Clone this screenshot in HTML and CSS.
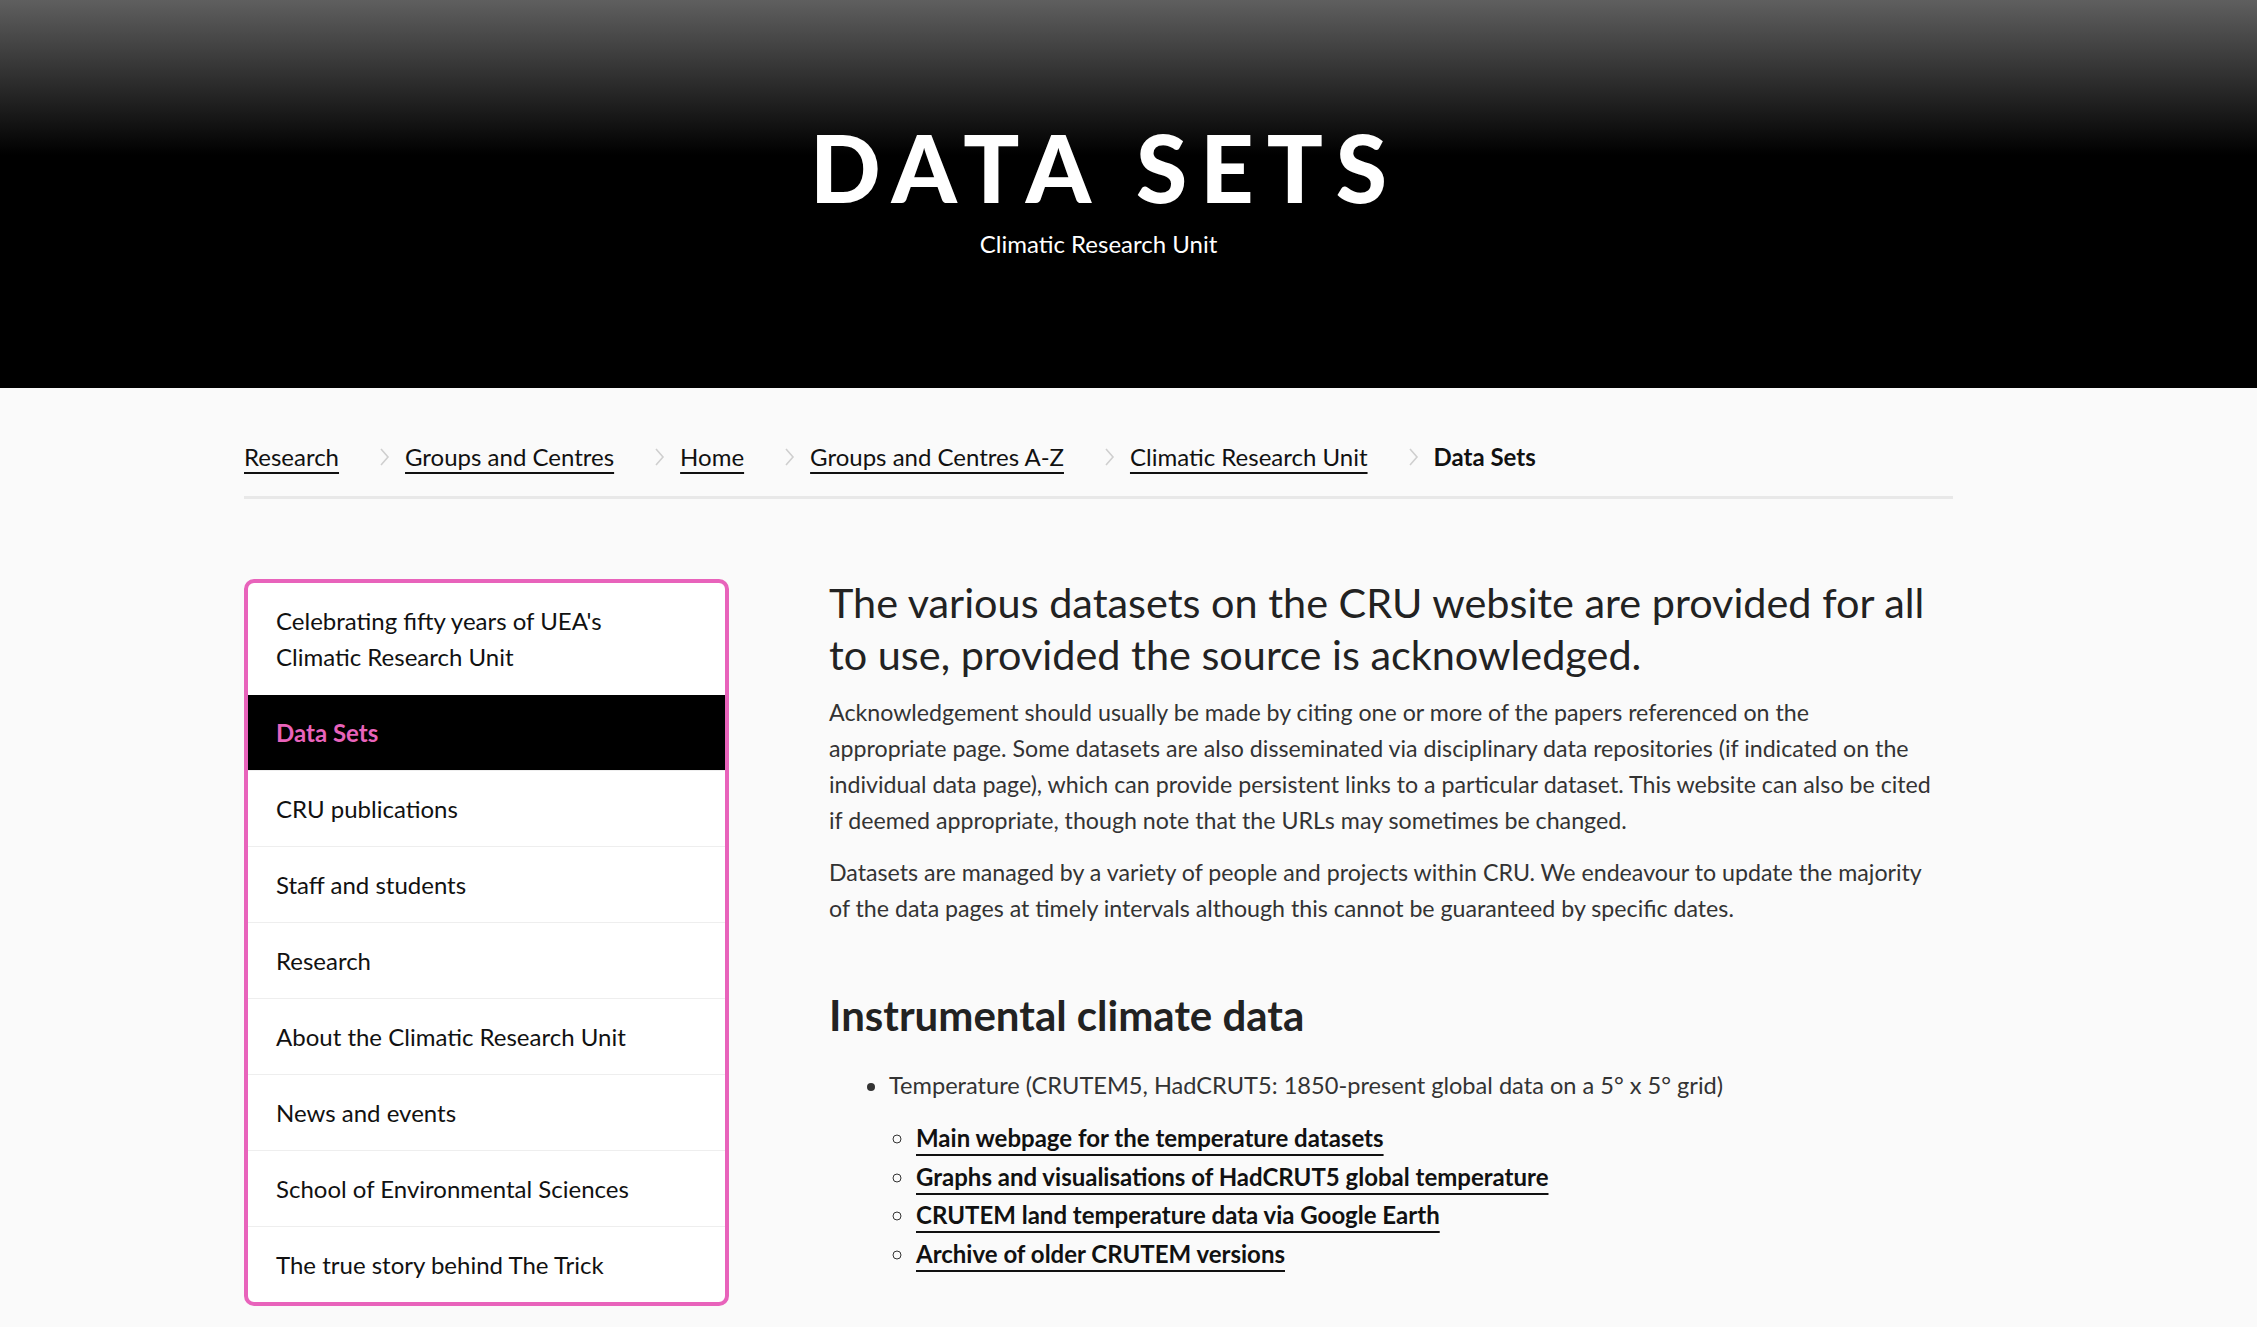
FILE: index.html
```html
<!DOCTYPE html>
<html lang="en">
<head>
    <meta charset="UTF-8">
    <meta name="viewport" content="width=device-width, initial-scale=1.0">
    <title>Data Sets - Climatic Research Unit</title>
    <link rel="stylesheet" href="styles.css">
</head>
<body>
    <header class="hero">
        <div class="page">
            <h1 class="hero-title">DATA SETS</h1>
            <p class="hero-sub">Climatic Research Unit</p>
        </div>
    </header>

    <div class="page">
        <nav class="crumbs">
            <ol>
                <li><a href="#">Research</a></li>
                <li><svg class="chev" width="11" height="18" viewBox="0 0 11 18"><path d="M2 1l7 8-7 8" fill="none" stroke="#cfcfcf" stroke-width="1.6"/></svg><a href="#">Groups and Centres</a></li>
                <li><svg class="chev" width="11" height="18" viewBox="0 0 11 18"><path d="M2 1l7 8-7 8" fill="none" stroke="#cfcfcf" stroke-width="1.6"/></svg><a href="#">Home</a></li>
                <li><svg class="chev" width="11" height="18" viewBox="0 0 11 18"><path d="M2 1l7 8-7 8" fill="none" stroke="#cfcfcf" stroke-width="1.6"/></svg><a href="#">Groups and Centres A-Z</a></li>
                <li><svg class="chev" width="11" height="18" viewBox="0 0 11 18"><path d="M2 1l7 8-7 8" fill="none" stroke="#cfcfcf" stroke-width="1.6"/></svg><a href="#">Climatic Research Unit</a></li>
                <li class="current"><svg class="chev" width="11" height="18" viewBox="0 0 11 18"><path d="M2 1l7 8-7 8" fill="none" stroke="#cfcfcf" stroke-width="1.6"/></svg>Data Sets</li>
            </ol>
        </nav>

        <div class="layout">
            <aside class="side-nav">
                <a href="#" class="side-item">Celebrating fifty years of UEA's Climatic Research Unit</a>
                <a href="#" class="side-item active">Data Sets</a>
                <a href="#" class="side-item">CRU publications</a>
                <a href="#" class="side-item">Staff and students</a>
                <a href="#" class="side-item">Research</a>
                <a href="#" class="side-item">About the Climatic Research Unit</a>
                <a href="#" class="side-item">News and events</a>
                <a href="#" class="side-item">School of Environmental Sciences</a>
                <a href="#" class="side-item">The true story behind The Trick</a>
            </aside>

            <main class="content">
                <h2 class="lead">The various datasets on the CRU website are provided for all to use, provided the source is acknowledged.</h2>
                <p>Acknowledgement should usually be made by citing one or more of the papers referenced on the<br>appropriate page. Some datasets are also disseminated via disciplinary data repositories (if indicated on the individual data page), which can provide persistent links to a particular dataset. This website can also be cited if deemed appropriate, though note that the URLs may sometimes be changed.</p>
                <p>Datasets are managed by a variety of people and projects within CRU. We endeavour to update the majority of the data pages at timely intervals although this cannot be guaranteed by specific dates.</p>

                <h3 class="section-title">Instrumental climate data</h3>
                <ul class="data-list">
                    <li>Temperature (CRUTEM5, HadCRUT5: 1850-present global data on a 5° x 5° grid)
                        <ul class="sub-list">
                            <li><a href="#">Main webpage for the temperature datasets</a></li>
                            <li><a href="#">Graphs and visualisations of HadCRUT5 global temperature</a></li>
                            <li><a href="#">CRUTEM land temperature data via Google Earth</a></li>
                            <li><a href="#">Archive of older CRUTEM versions</a></li>
                        </ul>
                    </li>
                </ul>
            </main>
        </div>
    </div>
</body>
</html>
```

FILE: styles.css
```css
body {
    margin: 0;
    background-color: #fafafa;
    font-family: Lato, "Noto Sans", sans-serif;
    color: #222;
}
a {
    color: #111;
}

.page {
    width: 1709px;
    margin-left: 244px;
}

/* header band */
.hero {
    height: 388px;
    box-sizing: border-box;
    padding-top: 121px;
    text-align: center;
    background: linear-gradient(#5f5f5f 0, #000 155px);
    color: #fff;
}
.hero-title {
    margin: 0;
    font-size: 93px;
    line-height: 1;
    font-weight: 900;
    letter-spacing: 0.14em;
    padding-left: 0.14em;
}
.hero-sub {
    margin: 18px 0 0;
    font-size: 24px;
    line-height: 1;
}

/* breadcrumb */
.crumbs {
    padding: 52px 0 23px;
    border-bottom: 3px solid #e8e8e8;
}
.crumbs ol {
    display: flex;
    margin: 0;
    padding: 0;
    list-style: none;
    font-size: 24px;
    line-height: 33px;
}
.crumbs li {
    display: flex;
    align-items: center;
}
.crumbs a {
    text-decoration: underline;
    text-decoration-thickness: 2px;
    text-underline-offset: 6px;
}
.crumbs .current {
    font-weight: 700;
    color: #111;
}
.chev {
    margin: 0 15px 0 40px;
}

.layout {
    display: flex;
    gap: 100px;
    align-items: flex-start;
    margin-top: 80px;
    padding-bottom: 60px;
}

/* side navigation */
.side-nav {
    flex: 0 0 485px;
    box-sizing: border-box;
    border: 4px solid #e863bb;
    border-radius: 10px;
    background: #fff;
    overflow: hidden;
}
.side-item {
    display: block;
    padding: 20px 40px 19px 28px;
    font-size: 24px;
    line-height: 36px;
    color: #111;
    text-decoration: none;
    border-top: 1px solid #eee;
}
.side-item:first-child {
    padding-bottom: 20px;
    border-top: none;
}
.side-item.active {
    background: #000;
    color: #e863bb;
    font-weight: 700;
    border-top: none;
}

/* main column */
.content {
    flex: 1;
    color: #333;
}
.lead {
    margin: -3px 0 14px;
    font-size: 41.4px;
    line-height: 52px;
    font-weight: 400;
    color: #222;
}
.content p {
    max-width: 1112px;
    margin: 0 0 16px;
    font-size: 23.2px;
    line-height: 36px;
}
.section-title {
    margin: 64px 0 27px;
    font-size: 42px;
    line-height: 1.2;
    font-weight: 700;
    color: #222;
}
.data-list {
    margin: 0;
    padding-left: 60px;
    font-size: 23.6px;
    line-height: 36px;
}
.sub-list {
    margin: 16px 0 0;
    padding-left: 27px;
    list-style: circle;
    font-size: 24px;
    line-height: 38.5px;
}
.sub-list a {
    font-weight: 700;
    text-decoration: underline;
    text-decoration-thickness: 2px;
    text-underline-offset: 7px;
}
```
